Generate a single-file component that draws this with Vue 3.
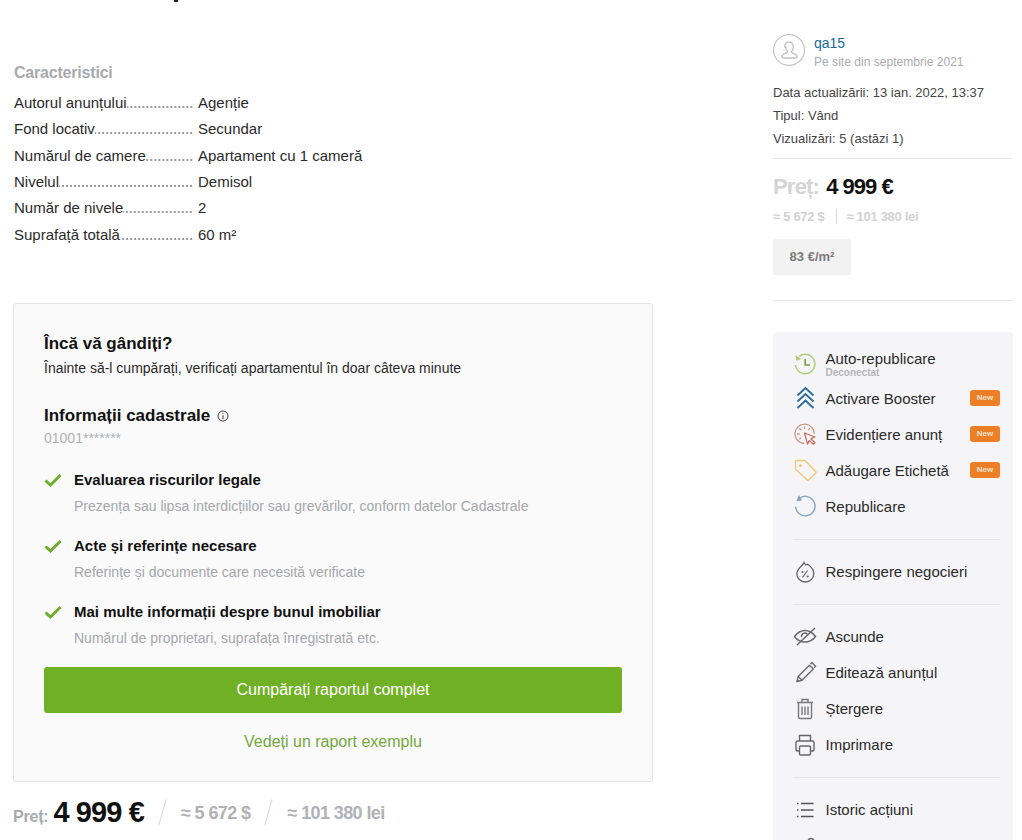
<script setup>
const specs = [
  ['Autorul anunțului', 'Agenție'],
  ['Fond locativ', 'Secundar'],
  ['Numărul de camere', 'Apartament cu 1 cameră'],
  ['Nivelul', 'Demisol'],
  ['Număr de nivele', '2'],
  ['Suprafață totală', '60 m²'],
]
const checks = [
  ['Evaluarea riscurilor legale', 'Prezența sau lipsa interdicțiilor sau grevărilor, conform datelor Cadastrale'],
  ['Acte și referințe necesare', 'Referințe și documente care necesită verificate'],
  ['Mai multe informații despre bunul imobiliar', 'Numărul de proprietari, suprafața înregistrată etc.'],
]
</script>

<template>
  <div class="page">
    <main class="left">
      <span class="title-tail"></span>
      <h2 class="spec-title">Caracteristici</h2>
      <div class="specs">
        <div v-for="s in specs" :key="s[0]" class="spec">
          <div class="spec-key"><span class="spec-name">{{ s[0] }}</span><i class="dots"></i></div>
          <div class="spec-val">{{ s[1] }}</div>
        </div>
      </div>

      <section class="card">
        <h3 class="card-h">Încă vă gândiți?</h3>
        <p class="card-sub">Înainte să-l cumpărați, verificați apartamentul în doar câteva minute</p>
        <h3 class="card-h cad">Informații cadastrale
          <svg class="info" viewBox="0 0 12 12" width="12" height="12"><circle cx="6" cy="6" r="5" fill="none" stroke="#444" stroke-width="1"/><path d="M6 5.200V9M6 3v1.100" stroke="#444" stroke-width="1.100" fill="none"/></svg>
        </h3>
        <div class="cad-num">01001*******</div>
        <div class="checks">
          <div v-for="c in checks" :key="c[0]" class="check">
            <svg class="tick" viewBox="0 0 18 14" width="18" height="14"><path d="M1.500 7.500 6.500 12 16.500 2" fill="none" stroke="#6fae2c" stroke-width="3"/></svg>
            <div>
              <div class="check-t">{{ c[0] }}</div>
              <div class="check-d">{{ c[1] }}</div>
            </div>
          </div>
        </div>
        <button class="buy">Cumpărați raportul complet</button>
        <div class="sample">Vedeți un raport exemplu</div>
      </section>

      <div class="bottom-price">
        <span class="bp-label">Preț:</span>
        <b class="bp-main">4 999 €</b>
        <span class="bp-slash"></span>
        <span class="bp-alt">≈ 5 672 $</span>
        <span class="bp-slash"></span>
        <span class="bp-alt">≈ 101 380 lei</span>
      </div>
    </main>

    <aside class="right">
      <div class="user">
        <svg class="avatar" viewBox="0 0 32 32" width="32" height="32">
          <circle cx="16" cy="16" r="15.400" fill="#fff" stroke="#c4c4c4" stroke-width="1.200"/>
          <path d="M11.800 13c0-3 1.800-4.800 4.200-4.800s4.200 1.800 4.200 4.800c0 2-.8 3.600-1.500 4.400-.4.500-.1 1 .5 1.300 2.600 1 4.800 1.800 4.800 3.700 0 1-.7 1.600-1.700 1.600H10.700c-1 0-1.700-.6-1.700-1.600 0-1.900 2.200-2.700 4.800-3.700.6-.3.9-.8.5-1.300-.7-.8-1.500-2.400-1.500-4.400z" fill="none" stroke="#bfbfbf" stroke-width="1.300"/>
        </svg>
        <div>
          <div class="user-name">qa15</div>
          <div class="user-since">Pe site din septembrie 2021</div>
        </div>
      </div>
      <div class="meta">
        <div>Data actualizării: 13 ian. 2022, 13:37</div>
        <div>Tipul: Vând</div>
        <div>Vizualizări: 5 (astăzi 1)</div>
      </div>
      <div class="price-box">
        <div class="price-line"><span class="p-label">Preț:</span> <b>4 999 €</b></div>
        <div class="alt-line"><span>≈ 5 672 $</span><i></i><span>≈ 101 380 lei</span></div>
        <div class="per-m">83 €/m²</div>
      </div>

      <nav class="panel">
        <div class="act first">
          <svg class="ic ic-low" viewBox="0 0 24 24"><path d="M6.200 4.300A9.700 9.700 0 1 1 2.500 13" fill="none" stroke="#b4cb7c" stroke-width="1.500"/><path d="M2.500 3.200 3.300 8.800 8.300 7z" fill="#b4cb7c"/><path d="M12.200 7v6H17" fill="none" stroke="#7d9c3e" stroke-width="1.600"/></svg>
          <div class="act-text"><div>Auto-republicare</div><small>Deconectat</small></div>
        </div>
        <div class="act">
          <svg class="ic" viewBox="0 0 24 24"><path d="M4.500 9.500 12.500 2l8 7.500M4.500 15.500l8-7.500 8 7.500M4.500 22l8-7.500 8 7.500" fill="none" stroke="#2a6a9e" stroke-width="1.800"/></svg>
          <span>Activare Booster</span><em class="new">New</em>
        </div>
        <div class="act">
          <svg class="ic" viewBox="0 0 24 24"><path d="M11 21.500A9.700 9.700 0 1 1 21.300 12" fill="none" stroke="#cc9384" stroke-width="1.300"/><path d="M11.500 4.500v2.500M4 12h2.500M6.300 6.300l1.800 1.800M16.800 6.300l-1.500 1.500M6.300 17.300l1.800-1.700" stroke="#cc9384" stroke-width="1.300"/><path d="M11.500 11l10.500 4-4 1.700 4 4-1.700 1.700-4-4-1.700 3.800z" fill="#f5f5f7" stroke="#c4705f" stroke-width="1.300" stroke-linejoin="round"/></svg>
          <span>Evidențiere anunț</span><em class="new">New</em>
        </div>
        <div class="act">
          <svg class="ic" viewBox="0 0 24 24"><path d="M3.500 2.500h7.500a2 2 0 0 1 1.400.6L22.500 13.500a1 1 0 0 1 0 1.400l-7 7a1 1 0 0 1-1.400 0L3 11.500a2 2 0 0 1-.5-1.300V3.500a1 1 0 0 1 1-1z" fill="none" stroke="#efc777" stroke-width="1.400"/><circle cx="7.500" cy="7.500" r="1.500" fill="#efc777"/></svg>
          <span>Adăugare Etichetă</span><em class="new">New</em>
        </div>
        <div class="act">
          <svg class="ic" viewBox="0 0 24 24"><path d="M7.200 3.800A9.700 9.700 0 1 1 2.600 12.500" fill="none" stroke="#8aa9c2" stroke-width="1.500"/><path d="M6 1 9 6.500 3.500 7z" fill="#7fa3bd"/></svg>
          <span>Republicare</span>
        </div>
        <hr class="sep" />
        <div class="act act-up">
          <svg class="ic" viewBox="0 0 24 24"><path d="M11 2.500c.8 2.200 2.300 3 3.800 1.700 3 2.200 6 5.500 6 9.300a8.500 8.500 0 0 1-17 0C3.800 9 9 6.500 11 2.500z" fill="none" stroke="#666" stroke-width="1.300"/><path d="M9.500 17.500l5-7" stroke="#666" stroke-width="1.200"/><circle cx="9.500" cy="12" r="1.100" fill="#666"/><circle cx="14.700" cy="16.500" r="1.100" fill="#666"/></svg>
          <span>Respingere negocieri</span>
        </div>
        <hr class="sep sep-b" />
        <div class="act">
          <svg class="ic" viewBox="0 0 24 24"><path d="M1.500 12.500c3-4 6.500-6 10.500-6s7.500 2 10.500 6c-3 4-6.500 5.500-10.500 5.500s-7.500-1.500-10.500-5.500z" fill="none" stroke="#666" stroke-width="1.400"/><path d="M8.500 13a3.500 3.500 0 0 1 6-2.800" fill="none" stroke="#666" stroke-width="1.400"/><path d="M4 21 22 4" stroke="#666" stroke-width="1.400"/></svg>
          <span>Ascunde</span>
        </div>
        <div class="act">
          <svg class="ic" viewBox="0 0 24 24"><path d="M4 21.500l1.200-5L16.500 5.200l3.800 3.800L9 20.300z" fill="none" stroke="#666" stroke-width="1.300" stroke-linejoin="round"/><path d="M17.500 4.200l1.500-1.500 3.500 3.500L21 7.700M5.200 16.500l3.800 3.800" fill="none" stroke="#666" stroke-width="1.300"/><path d="M3.500 22l.7-3 2.300 2.300z" fill="#666"/></svg>
          <span>Editează anunțul</span>
        </div>
        <div class="act">
          <svg class="ic" viewBox="0 0 24 24"><path d="M4 6.500h16M9 6.500v-3h6v3M5.500 6.500V21a1.500 1.500 0 0 0 1.500 1.500h10a1.500 1.500 0 0 0 1.500-1.500V6.500M9 10.500v8.500M12 10.500v8.500M15 10.500v8.500" fill="none" stroke="#777" stroke-width="1.400"/></svg>
          <span>Ștergere</span>
        </div>
        <div class="act">
          <svg class="ic" viewBox="0 0 24 24"><path d="M6.500 9V3.500h11V9M6.500 19H4.500a1.500 1.500 0 0 1-1.500-1.500v-7A1.500 1.500 0 0 1 4.500 9h15a1.500 1.500 0 0 1 1.500 1.500v7a1.500 1.500 0 0 1-1.500 1.500h-2" fill="none" stroke="#666" stroke-width="1.400"/><rect x="6.500" y="14" width="11" height="9" rx="1.200" fill="none" stroke="#666" stroke-width="1.400"/></svg>
          <span>Imprimare</span>
        </div>
        <hr class="sep sep-c" />
        <div class="act">
          <svg class="ic" viewBox="0 0 24 24"><path d="M8 6.500h12.500M8 13h12.500M8 19.500h12.500M4 6.500h1.500M4 13h1.500M4 19.500h1.500" stroke="#555" stroke-width="1.400"/></svg>
          <span>Istoric acțiuni</span>
        </div>
        <div class="act">
          <svg class="ic" viewBox="0 0 24 24"><circle cx="18" cy="8.500" r="3" fill="none" stroke="#666" stroke-width="1.300"/></svg>
        </div>
      </nav>
    </aside>
  </div>
</template>

<style scoped>
.page {
  display: flex;
  width: 1022px;
  height: 840px;
  overflow: hidden;
  background: #fff;
  font-family: "Liberation Sans", Arial, sans-serif;
  color: #222;
  font-size: 14px;
}
.left {
  position: relative;
  width: 640px;
  margin-left: 13px;
  padding-top: 64px;
  flex: none;
}
.title-tail {
  position: absolute;
  left: 161px;
  top: 0;
  width: 4px;
  height: 2px;
  background: #222;
}
.spec-title {
  margin: 0 0 8px 1px;
  font-size: 16px;
  line-height: 17px;
  font-weight: 700;
  letter-spacing: -0.2px;
  color: #a8aaad;
}
.specs { display: flex; flex-direction: column; padding-top: 0.4px; }
.spec { display: flex; height: 26.300px; align-items: center; font-size: 15px; color: #2a2a2a; }
.spec-key { width: 179px; display: flex; margin-left: 1px; flex: none; }
.spec-name { flex: none; }
.dots {
  flex: 1;
  min-width: 0;
  background-image: radial-gradient(circle at 2px 2px, #666 0.6px, transparent 0.9px);
  background-size: 4px 4px;
  background-repeat: repeat-x;
  background-position: right 0 bottom 2px;
}
.spec-val { margin-left: 5px; }
.card {
  margin-top: 55.600px;
  box-sizing: border-box;
  height: 479px;
  padding: 30px 30px 0;
  background: #fafafa;
  border: 1px solid #e6e6e6;
  border-radius: 3px;
}
.card-h {
  margin: 0;
  font-size: 17px;
  line-height: 20px;
  font-weight: 700;
  color: #111;
}
.card-sub { margin: 5px 0 0; font-size: 14px; line-height: 18px; color: #2a2a2a; }
.cad { margin-top: 29px; }
.info { vertical-align: -1px; margin-left: 2px; }
.cad-num { margin-top: 3px; line-height: 18px; color: #b0b2b5; font-size: 14px; }
.checks { margin-top: 24px; }
.check { display: flex; height: 48px; margin-bottom: 18px; }
.tick { flex: none; margin: 2px 12px 0 0; }
.check-t { font-size: 15px; font-weight: 700; line-height: 18px; color: #111; }
.check-d { margin-top: 8px; font-size: 14px; line-height: 18px; color: #a5a7aa; }
.buy {
  display: block;
  width: 578px;
  height: 46px;
  margin-top: -2px;
  border: 0;
  border-radius: 3px;
  background: #70b025;
  color: #fff;
  font: 16px "Liberation Sans", Arial, sans-serif;
}
.sample { margin-top: 19px; text-align: center; font-size: 16px; line-height: 20px; color: #74a83c; }
.bottom-price { display: flex; align-items: baseline; margin-top: 13px; color: #a8aaad; }
.bp-label { font-size: 16px; font-weight: 700; margin-right: 5px; letter-spacing: -0.2px; }
.bp-main { font-size: 29px; line-height: 34px; color: #111; letter-spacing: -0.9px; }
.bp-alt { align-self: center; margin-top: 4px; font-size: 18px; font-weight: 700; color: #b0b2b5; letter-spacing: -0.6px; }
.bp-slash {
  align-self: center;
  width: 1px;
  height: 26px;
  background: #d8d8d8;
  transform: rotate(16deg);
  margin: 0 18px;
}
.right {
  width: 240px;
  margin-left: 120px;
  flex: none;
  padding-top: 34px;
}
.user { display: flex; gap: 9px; }
.avatar { flex: none; }
.user-name { font-size: 14px; line-height: 18px; color: #1c6a9e; }
.user-since { margin-top: 3px; font-size: 12px; line-height: 15px; color: #a9abae; letter-spacing: 0.03px; }
.meta {
  margin: 11px 1px 0 0;
  padding-bottom: 8px;
  border-bottom: 1px solid #e6e6e6;
  font-size: 13px;
  line-height: 23px;
  color: #444;
}
.price-box {
  margin-right: 1px;
  padding: 15px 0 25px;
  border-bottom: 1px solid #e6e6e6;
}
.price-line { font-size: 22px; line-height: 25px; font-weight: 700; color: #111; letter-spacing: -1px; }
.p-label { color: #d4d4d4; letter-spacing: -0.8px; margin-right: 2px; }
.alt-line { display: flex; align-items: center; margin-top: 9px; height: 16px; font-size: 13px; font-weight: 700; letter-spacing: -0.3px; color: #d2d2d2; }
.alt-line i { width: 1px; height: 15px; background: #d8d8d8; margin: 0 9px 0 12px; }
.per-m {
  box-sizing: border-box;
  width: 78px;
  height: 36px;
  margin-top: 15px;
  border-radius: 2px;
  background: #f2f2f2;
  font-size: 13px;
  line-height: 36px;
  font-weight: 700;
  text-align: center;
  color: #7b7b7b;
}
.panel {
  margin-top: 31px;
  padding: 9px 13px 0 20px;
  background: #f5f5f7;
  border-radius: 4px;
  min-height: 540px;
}
.act {
  display: flex;
  align-items: center;
  height: 36px;
  font-size: 15px;
  color: #2a2a2a;
}
.act.first { margin-top: 2px; margin-bottom: 1px; }
.act-up { padding-bottom: 1px; box-sizing: border-box; }
.act-text { line-height: 16px; padding-top: 7px; }
.act-text small { display: block; font-size: 10px; line-height: 12px; font-weight: 700; color: #b4b6b9; }
.ic { width: 24px; height: 24px; flex: none; margin-right: 8.500px; }
.ic-low { margin-top: 6px; }
.new {
  margin-left: auto;
  width: 30px;
  height: 16px;
  border-radius: 3px;
  background: #ec7f26;
  color: #fbe3cf;
  font-size: 8px;
  line-height: 16px;
  font-weight: 700;
  font-style: normal;
  text-align: center;
}
.sep { border: 0; border-top: 1px solid #e4e4e6; margin: 15px 0 14px; }
.sep-b { margin: 14px 0 13px; }
.sep-c { margin: 15px 0 13px; }
</style>

<style>
html, body { margin: 0; background: #fff; }
</style>
